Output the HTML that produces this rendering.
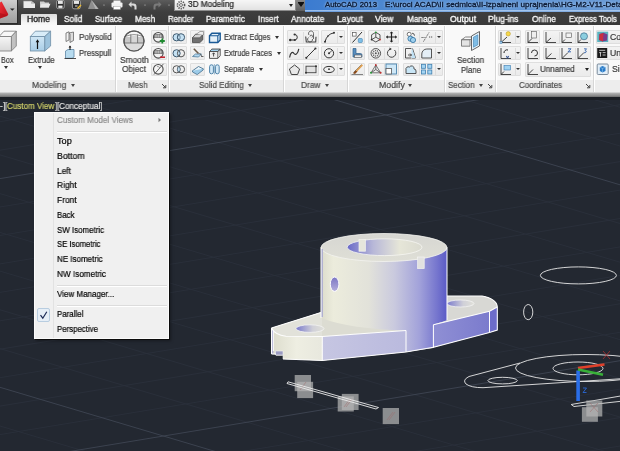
<!DOCTYPE html>
<html><head><meta charset="utf-8">
<style>
*{margin:0;padding:0;box-sizing:border-box}
html,body{width:620px;height:451px;overflow:hidden;background:#232831;font-family:"Liberation Sans",sans-serif}
.a{position:absolute}
.t{position:absolute;white-space:pre;line-height:1;transform-origin:0 0;-webkit-text-stroke:0.2px currentColor;will-change:transform}
#qat{left:0;top:0;width:305px;height:12px;background:linear-gradient(#5c5c5c,#474747 60%,#3e3e3e)}
#title{left:305px;top:0;width:315px;height:12px;background:linear-gradient(rgba(255,255,255,0) 80%,rgba(190,215,245,.75) 87%,rgba(140,180,230,.3) 100%),linear-gradient(90deg,#3b7bd0,#4d88d0 25%,#5f94d4 60%,#6a9ad6)}
#tabs{left:0;top:12px;width:620px;height:13px;background:linear-gradient(#3e3e3e,#383838)}
#ribbon{left:0;top:25px;width:620px;height:55px;background:#f9f9f9}
#plabel{left:0;top:79.5px;width:620px;height:12.5px;background:#ededed}
#shadow{left:0;top:92px;width:620px;height:5px;background:linear-gradient(#dcdcdc 0,#cfcfcf 12%,#ababab 30%,#8c8c8c 70%,#6c6c6c)}
#dshadow{left:0;top:97px;width:620px;height:3px;background:#1b1e24}
.sep{position:absolute;top:26px;width:2px;height:66px;border-left:1px solid #d6d6d6;border-right:1px solid #ffffff}
.btn{position:absolute;background:linear-gradient(#f3f3f3,#ebebeb);border:1px solid #dedede;border-radius:1px}
.arr{position:absolute;width:0;height:0;border-left:2.5px solid transparent;border-right:2.5px solid transparent;border-top:3px solid #333}
</style></head><body>
<svg class="a" style="left:0;top:97px" width="620" height="354" viewBox="0 97 620 354">
<defs>
 <linearGradient id="gcyl" x1="321" y1="0" x2="447" y2="0" gradientUnits="userSpaceOnUse">
  <stop offset="0" stop-color="#dcdccc"/><stop offset=".1" stop-color="#ececdc"/><stop offset=".38" stop-color="#e2e2da"/>
  <stop offset=".58" stop-color="#cacade"/><stop offset=".78" stop-color="#a2a2da"/><stop offset=".92" stop-color="#7676ce"/><stop offset="1" stop-color="#5a5ac6"/>
 </linearGradient>
 <linearGradient id="ghole" x1="347" y1="0" x2="422" y2="0" gradientUnits="userSpaceOnUse">
  <stop offset="0" stop-color="#6a6ac8"/><stop offset=".35" stop-color="#b8b8d8"/><stop offset=".7" stop-color="#e6e6d8"/><stop offset="1" stop-color="#dadad0"/>
 </linearGradient>
 <linearGradient id="gtop" x1="0" y1="233" x2="0" y2="262" gradientUnits="userSpaceOnUse">
  <stop offset="0" stop-color="#d6d6d2"/><stop offset="1" stop-color="#dfdfd6"/>
 </linearGradient>
 <linearGradient id="gend" x1="271" y1="0" x2="322" y2="0" gradientUnits="userSpaceOnUse">
  <stop offset="0" stop-color="#dcdccc"/><stop offset=".5" stop-color="#eeeee2"/><stop offset="1" stop-color="#e8e8de"/>
 </linearGradient>
 <linearGradient id="gfl" x1="322" y1="0" x2="405" y2="0" gradientUnits="userSpaceOnUse">
  <stop offset="0" stop-color="#c6c6e2"/><stop offset="1" stop-color="#babade"/>
 </linearGradient>
 <linearGradient id="ghub" x1="405" y1="0" x2="434" y2="0" gradientUnits="userSpaceOnUse">
  <stop offset="0" stop-color="#c8c8dc"/><stop offset="1" stop-color="#7e7ed0"/>
 </linearGradient>
 <linearGradient id="grf" x1="434" y1="0" x2="497" y2="0" gradientUnits="userSpaceOnUse">
  <stop offset="0" stop-color="#8f8fd4"/><stop offset="1" stop-color="#7878cc"/>
 </linearGradient>
 <linearGradient id="gbh" x1="0" y1="0" x2="1" y2="0">
  <stop offset="0" stop-color="#7a7acc"/><stop offset=".6" stop-color="#d0d0d8"/><stop offset="1" stop-color="#e0e0d8"/>
 </linearGradient>
</defs>
<!-- grid -->
<g stroke="#2a303b" stroke-width=".9" fill="none"><path d="M0 93.3 L620 -9.0 M0 121.7 L620 19.4 M0 150.2 L620 47.9 M0 207.0 L620 104.7 M0 235.5 L620 133.2 M0 263.9 L620 161.6 M0 292.4 L620 190.1 M0 320.8 L620 218.5 M0 349.2 L620 246.9 M0 377.7 L620 275.4 M0 406.1 L620 303.8 M0 434.6 L620 332.3 M0 491.4 L620 389.1 M0 519.9 L620 417.6 M0 548.3 L620 446.0 M0 576.8 L620 474.5 M0 -116.2 L620 68.6 M0 -77.5 L620 107.3 M0 -38.7 L620 146.0 M0 38.7 L620 223.5 M0 77.5 L620 262.2 M0 116.2 L620 300.9 M0 154.9 L620 339.7 M0 193.6 L620 378.4 M0 232.4 L620 417.1 M0 271.1 L620 455.9 M0 309.8 L620 494.6 M0 348.6 L620 533.3 M0 426.0 L620 610.8 M0 464.8 L620 649.5"/></g>
<g stroke="#3e4552" stroke-width=".9" fill="none"><path d="M0 178.6 L620 76.3 M0 463.0 L620 360.7 M0 0.0 L620 184.8 M0 387.3 L620 572.1"/></g>
<!-- base flange -->
<path d="M271.5 328 L322 312 L447 296 L482 296 Q497 299 497.3 307 L497.3 330 L489.5 332.6 L433.4 347.3 L433.4 348 L406 352 L322.3 360.5 L283 359 L283 355 L271.5 354Z" fill="#dcdcd2"/>
<path d="M271.5 328 Q275 335 286 336.2 L322.3 336.5 L322.3 360.5 L283 359 L283 355 L271.5 354Z" fill="url(#gend)"/><path d="M271.5 328 L273.3 330 V354 H271.5Z" fill="#a8a8d0"/>
<path d="M322.3 336.5 L406 330.6 L406 352 L322.3 360.5Z" fill="url(#gfl)"/>
<path d="M406 330.6 L433.4 324.8 L433.4 347.3 L406 352Z" fill="url(#ghub)"/>
<path d="M433.4 324.8 L489.5 311.3 L489.5 332.6 L433.4 347.3Z" fill="url(#grf)"/>
<path d="M489.5 311.3 L497.3 307 L497.3 330 L489.5 332.6Z" fill="#6c6cca"/>
<path d="M275.5 351 h7.5 v4 h-7.5z" fill="#9a9ac0" stroke="#f0f0f0" stroke-width=".6"/><path d="M276 355.5 h7 v3.5" fill="none" stroke="#f0f0f0" stroke-width=".6"/>
<!-- base top face -->
<path d="M271.5 328 L322 312 L322 336.5 L286 336.2 Q275 335 271.5 328Z" fill="#e2e2da"/>
<path d="M447 296 L482 296 Q497 299 497.3 307 L489.5 311.3 L447 321Z" fill="#d8d8d4"/>
<ellipse cx="310" cy="328.6" rx="14" ry="3.8" fill="url(#gbh)" stroke="#f2f2f2" stroke-width=".8"/>
<ellipse cx="460.5" cy="303.5" rx="13.5" ry="3.5" fill="url(#gbh)" stroke="#f2f2f2" stroke-width=".8"/>
<!-- cylinder -->
<path d="M321 247.5 L321 318 Q350 329 406 330.6 L406 352 L433.4 347.3 L433.4 324.8 Q445 321 447 320 L447 247.5Z" fill="url(#gcyl)"/>
<ellipse cx="384" cy="247.5" rx="63" ry="14" fill="url(#gtop)" stroke="#f4f4f0" stroke-width=".8"/>
<ellipse cx="384.6" cy="247.2" rx="37.4" ry="8.4" fill="url(#ghole)" stroke="#f6f6f2" stroke-width=".8"/>
<rect x="359" y="239.6" width="6.4" height="11.6" fill="#e6e6dc" stroke="#f4f4f0" stroke-width=".7"/>
<rect x="417.6" y="257" width="6.6" height="11.6" fill="#e2e2e0" stroke="#f4f4f0" stroke-width=".7"/>
<defs><linearGradient id="gsh" x1="0" y1="0" x2="0" y2="1"><stop offset="0" stop-color="#7c76c4"/><stop offset="1" stop-color="#b4aedc"/></linearGradient></defs>
<ellipse cx="334.6" cy="284.2" rx="4.3" ry="7.2" fill="url(#gsh)" stroke="#ffffff" stroke-width="1"/>
<path d="M322 249 V317" stroke="#b0b0d0" stroke-width="2"/>
<!-- edges -->
<g stroke="#fdfdfd" stroke-width="1.05" fill="none">
 <path d="M321 247.5 V318"/><path d="M447 247.5 V320"/>
 <path d="M271.5 328 Q275 335 286 336.2 L322.3 336.5 L406 330.6"/>
 <path d="M322.3 336.5 V360.5"/><path d="M406 330.6 V352"/><path d="M433.4 324.8 V347.3 L489.5 332.6"/>
 <path d="M433.4 324.8 L489.5 311.3 L497.3 307"/><path d="M489.5 311.3 V332.6"/>
 <path d="M271.5 354 H276 M283 359 L322.3 360.5 L406 352 L433.4 347.3"/>
 <path d="M273.3 330 V351 M271.5 328 V354"/><path d="M497.3 307 V330 L489.5 332.6"/>
 <path d="M271.5 328 L321 312.5"/><path d="M447 296 L482 296 Q497 299 497.3 307"/>
</g>
<!-- other drawing objects -->
<g stroke="#e8e8e8" stroke-width=".9" fill="none">
 <ellipse cx="578.4" cy="275.4" rx="38" ry="8.5"/>
 <ellipse cx="528.2" cy="312.1" rx="4.6" ry="7.6"/>
 <ellipse cx="502.6" cy="380.6" rx="14.7" ry="3.3"/>
 <ellipse cx="578" cy="368.4" rx="25" ry="6.4"/>
 <path d="M520 363 L469 376.5 Q462 380 466 384 Q471 387.7 483 387.7 L620 378.8"/>
 <ellipse cx="586" cy="368" rx="70.5" ry="13.5"/>
 
 <path d="M571.2 404.5 L620 396.1 M571.2 404.5 L574 406.5 L620 401.4"/>
</g>
<!-- grips -->
<g fill="#b4b4b4" fill-opacity=".72">
 <rect x="294.7" y="375" width="16.3" height="16.2"/><rect x="297.2" y="381.8" width="15.9" height="16.3"/>
 <rect x="337.7" y="396.4" width="16.1" height="15.1"/><rect x="341.8" y="393.9" width="16.8" height="16.1"/>
 <rect x="382.7" y="408" width="16.3" height="16.1"/>
 <rect x="581.9" y="407.2" width="16" height="14.6"/><rect x="586.3" y="400.5" width="16" height="16"/>
</g>
<g stroke="#a06a6a" stroke-width=".6" opacity=".8">
 <path d="M300 390 L306 382 M344 407 L350 399 M346 407 L352 399 M387 420 L393 412 M389 420 L395 412 M590 412 L598 403 M590 403 L598 412"/>
</g>
<g stroke="#ececec" stroke-width=".9" fill="none"><path d="M288 381.8 L378.5 407.5 L376 409 L287 383.5Z"/></g>
<!-- UCS -->
<path d="M578.1 401 V370.5" stroke="#2a6ee8" stroke-width="3.6"/>
<path d="M578 368 L604.5 364.5" stroke="#e0402a" stroke-width="2.6"/>
<path d="M578 369.5 L603 374.8" stroke="#38b038" stroke-width="2.6"/>
<path d="M583 388 h3.5 l-3.5 4.5 h3.5" stroke="#2a6ee8" stroke-width=".8" fill="none"/>
<path d="M603 351 L610 359 M610 351 L603 359" stroke="#c03030" stroke-width=".7"/>
</svg>
<div class="a" style="left:0;top:97px;width:620px;height:3px;background:#1b1e24"></div>
<div class="a" id="qat"></div>
<div class="a" id="title"></div>
<div class="a" id="tabs"></div>
<!-- app button -->
<div class="a" style="left:0;top:0;width:18px;height:24px;background:linear-gradient(#cfcfcf,#b4b4b4 50%,#9e9e9e);border-right:1px solid #2a2a2a;border-bottom:1px solid #2a2a2a"></div>
<svg class="a" style="left:0;top:0" width="17" height="23" viewBox="0 0 17 23">
 <defs><linearGradient id="gA" x1="0" y1="0" x2="1" y2="1"><stop offset="0" stop-color="#f03038"/><stop offset="1" stop-color="#b8101a"/></linearGradient></defs>
 <path d="M0 2.5 L1.6 1.6 L8.3 14.2 L7.2 16 L0 18.6Z" fill="url(#gA)"/>
 <path d="M0 13 L7.5 15.2 L0 18.6Z" fill="#a80e16" opacity=".6"/>
 <path d="M10 8.4 L14.6 8.4 L12.3 10.8Z" fill="#262626"/>
</svg>
<!-- QAT icons -->
<svg class="a" style="left:17px;top:0" width="160" height="12" viewBox="17 0 160 12">
 <path d="M23.5 0.8 H31 L35 3.8 V8 H23.5Z" fill="#ececec"/><path d="M31 0.8 V3.8 H35" fill="#bdbdbd"/><path d="M23.5 0.8 H31" stroke="#555" stroke-width=".6"/>
 <path d="M40 1.5 H44 L45 2.5 H49 V7.5 H40Z" fill="#cfcfcf"/><path d="M41.5 3.8 H50.5 L48.8 7.5 H40Z" fill="#e9e9e9"/>
 <rect x="56.6" y="0.2" width="7.6" height="8.4" rx="1.6" fill="#2c2c2c" stroke="#bdbdbd" stroke-width=".7"/><rect x="58" y="0.6" width="4.8" height="3.3" fill="#e6e6e6"/><rect x="58.3" y="5.6" width="4.2" height="2.3" fill="#f0f0f0"/>
 <rect x="72.4" y="0.2" width="8" height="8.6" rx="1.6" fill="#2c2c2c" stroke="#bdbdbd" stroke-width=".7"/><rect x="73.8" y="0.6" width="5.2" height="3.3" fill="#e6e6e6"/><path d="M77.5 8.5 L81 5" stroke="#e8b830" stroke-width="1.4"/><path d="M75 6 h2.5" stroke="#ddd" stroke-width="1"/>
 <path d="M88 9 L91.5 0 L98.5 9Z" fill="#8e8e8e"/><path d="M91.5 0 L98.5 9 L95.5 9Z" fill="#b4b4b4"/>
 <circle cx="104" cy="5" r=".6" fill="#ccc"/>
 <rect x="111.5" y="2.5" width="11" height="5" rx="1" fill="#f0f0f0"/><rect x="113.5" y="0.5" width="7" height="3" fill="#f6f6f6"/><rect x="113.5" y="6.5" width="7" height="3" fill="#fff" stroke="#888" stroke-width=".4"/>
 <path d="M128.5 4.5 l3 -3 v2 h2 a3 3 0 0 1 3 3 v3 h-2 v-2.5 a1.5 1.5 0 0 0 -1.5 -1.5 h-1.5 v2z" fill="#d9d9d9"/>
 <circle cx="145" cy="5" r=".6" fill="#ccc"/>
 <path d="M161.5 4.5 l-3 -3 v2 h-2 a3 3 0 0 0 -3 3 v3 h2 v-2.5 a1.5 1.5 0 0 1 1.5 -1.5 h1.5 v2z" fill="#7a7a7a"/>
 <circle cx="169" cy="5" r=".6" fill="#ccc"/>
</svg>
<!-- workspace combo -->
<div class="a" style="left:173.5px;top:0;width:122px;height:10.5px;background:linear-gradient(#f6f6f6,#e2e2e2);border:1px solid #8c8c8c;border-top:none"></div>
<svg class="a" style="left:174px;top:0" width="14" height="11" viewBox="0 0 14 11">
 <circle cx="7" cy="5" r="3.6" fill="none" stroke="#555" stroke-width="1.6" stroke-dasharray="1.3 1"/>
 <circle cx="7" cy="5" r="1.5" fill="none" stroke="#555" stroke-width=".8"/>
</svg>
<div class="arr" style="left:288.5px;top:4px;border-top-color:#222"></div>
<div class="a" style="left:295.5px;top:0;width:9.5px;height:11px;background:linear-gradient(#8a8a8a,#5e5e5e)"></div>
<div class="arr" style="left:297.5px;top:3px;border-left-width:3px;border-right-width:3px;border-top-width:4px;border-top-color:#111"></div>
<div class="a" style="left:297.5px;top:2px;width:6px;height:1px;background:#111"></div>
<!-- Home tab -->
<div class="a" style="left:21px;top:14px;width:36px;height:12px;background:linear-gradient(#dcdcdc,#f4f4f4 70%,#f9f9f9);border-radius:1px 1px 0 0"></div>
<!-- ribbon -->
<div class="a" id="ribbon"></div>
<div class="a" id="plabel"></div>
<div class="a" id="shadow"></div>
<div class="a" id="dshadow"></div>
<div class="sep" style="left:115px"></div>
<div class="sep" style="left:168px"></div>
<div class="sep" style="left:283px"></div>
<div class="sep" style="left:346.5px"></div>
<div class="sep" style="left:444px"></div>
<div class="sep" style="left:495px"></div>
<div class="sep" style="left:592.5px"></div>
<div class="btn" style="left:150.5px;top:30.2px;width:16.0px;height:14.3px"></div>
<div class="btn" style="left:150.5px;top:46.3px;width:16.0px;height:14.1px"></div>
<div class="btn" style="left:150.5px;top:62.5px;width:16.0px;height:13.7px"></div>
<div class="btn" style="left:171px;top:30.2px;width:15.5px;height:14.3px"></div>
<div class="btn" style="left:189.5px;top:30.2px;width:15.5px;height:14.3px"></div>
<div class="btn" style="left:171px;top:46.3px;width:15.5px;height:14.1px"></div>
<div class="btn" style="left:189.5px;top:46.3px;width:15.5px;height:14.1px"></div>
<div class="btn" style="left:171px;top:62.5px;width:15.5px;height:13.7px"></div>
<div class="btn" style="left:189.5px;top:62.5px;width:15.5px;height:13.7px"></div>
<div class="btn" style="left:286.5px;top:30.2px;width:32.2px;height:14.3px"></div>
<div class="a" style="left:302.5px;top:31.7px;width:1px;height:11.3px;background:#dcdcdc"></div>
<div class="btn" style="left:321px;top:30.2px;width:24.3px;height:14.3px"></div>
<div class="a" style="left:337.3px;top:31.7px;width:1px;height:11.3px;background:#dcdcdc"></div>
<div class="arr" style="left:339.3px;top:36.1px;border-left-width:2px;border-right-width:2px;border-top-width:2.5px;border-top-color:#333"></div>
<div class="btn" style="left:286.5px;top:46.3px;width:32.2px;height:14.1px"></div>
<div class="a" style="left:302.5px;top:47.8px;width:1px;height:11.1px;background:#dcdcdc"></div>
<div class="btn" style="left:321px;top:46.3px;width:24.3px;height:14.1px"></div>
<div class="a" style="left:337.3px;top:47.8px;width:1px;height:11.1px;background:#dcdcdc"></div>
<div class="arr" style="left:339.3px;top:52.099999999999994px;border-left-width:2px;border-right-width:2px;border-top-width:2.5px;border-top-color:#333"></div>
<div class="btn" style="left:286.5px;top:62.5px;width:32.2px;height:13.7px"></div>
<div class="a" style="left:302.5px;top:64.0px;width:1px;height:10.7px;background:#dcdcdc"></div>
<div class="btn" style="left:321px;top:62.5px;width:24.3px;height:13.7px"></div>
<div class="a" style="left:337.3px;top:64.0px;width:1px;height:10.7px;background:#dcdcdc"></div>
<div class="arr" style="left:339.3px;top:68.1px;border-left-width:2px;border-right-width:2px;border-top-width:2.5px;border-top-color:#333"></div>
<div class="btn" style="left:349.8px;top:30.2px;width:14.9px;height:14.3px"></div>
<div class="btn" style="left:368.4px;top:30.2px;width:30.6px;height:14.3px"></div>
<div class="a" style="left:383.7px;top:31.7px;width:1px;height:11.3px;background:#dcdcdc"></div>
<div class="btn" style="left:403.4px;top:30.2px;width:39.2px;height:14.3px"></div>
<div class="a" style="left:419px;top:31.7px;width:1px;height:11.3px;background:#dcdcdc"></div>
<div class="a" style="left:434.5px;top:31.7px;width:1px;height:11.3px;background:#dcdcdc"></div>
<div class="arr" style="left:436.5px;top:36.1px;border-left-width:2px;border-right-width:2px;border-top-width:2.5px;border-top-color:#333"></div>
<div class="btn" style="left:349.8px;top:46.3px;width:14.9px;height:14.1px"></div>
<div class="btn" style="left:368.4px;top:46.3px;width:30.6px;height:14.1px"></div>
<div class="a" style="left:383.7px;top:47.8px;width:1px;height:11.1px;background:#dcdcdc"></div>
<div class="btn" style="left:403.4px;top:46.3px;width:39.2px;height:14.1px"></div>
<div class="a" style="left:419px;top:47.8px;width:1px;height:11.1px;background:#dcdcdc"></div>
<div class="a" style="left:434.5px;top:47.8px;width:1px;height:11.1px;background:#dcdcdc"></div>
<div class="arr" style="left:436.5px;top:52.099999999999994px;border-left-width:2px;border-right-width:2px;border-top-width:2.5px;border-top-color:#333"></div>
<div class="btn" style="left:349.8px;top:62.5px;width:14.9px;height:13.7px"></div>
<div class="btn" style="left:368.4px;top:62.5px;width:30.6px;height:13.7px"></div>
<div class="a" style="left:383.7px;top:64.0px;width:1px;height:10.7px;background:#dcdcdc"></div>
<div class="btn" style="left:403.4px;top:62.5px;width:39.2px;height:13.7px"></div>
<div class="a" style="left:419px;top:64.0px;width:1px;height:10.7px;background:#dcdcdc"></div>
<div class="a" style="left:434.5px;top:64.0px;width:1px;height:10.7px;background:#dcdcdc"></div>
<div class="arr" style="left:436.5px;top:68.1px;border-left-width:2px;border-right-width:2px;border-top-width:2.5px;border-top-color:#333"></div>
<div class="btn" style="left:498.4px;top:30.2px;width:23.1px;height:14.3px"></div>
<div class="a" style="left:514.5px;top:31.7px;width:1px;height:11.3px;background:#dcdcdc"></div>
<div class="arr" style="left:515.8px;top:36.1px;border-left-width:2px;border-right-width:2px;border-top-width:2.5px;border-top-color:#333"></div>
<div class="btn" style="left:498.4px;top:46.3px;width:23.1px;height:14.1px"></div>
<div class="a" style="left:514.5px;top:47.8px;width:1px;height:11.1px;background:#dcdcdc"></div>
<div class="arr" style="left:515.8px;top:52.099999999999994px;border-left-width:2px;border-right-width:2px;border-top-width:2.5px;border-top-color:#333"></div>
<div class="btn" style="left:498.4px;top:62.5px;width:23.1px;height:13.7px"></div>
<div class="a" style="left:514.5px;top:64.0px;width:1px;height:10.7px;background:#dcdcdc"></div>
<div class="arr" style="left:515.8px;top:68.1px;border-left-width:2px;border-right-width:2px;border-top-width:2.5px;border-top-color:#333"></div>
<div class="btn" style="left:524.8px;top:30.2px;width:15.4px;height:14.3px"></div>
<div class="btn" style="left:543.4px;top:30.2px;width:47.6px;height:14.3px"></div>
<div class="a" style="left:559px;top:31.7px;width:1px;height:11.3px;background:#dcdcdc"></div>
<div class="a" style="left:575px;top:31.7px;width:1px;height:11.3px;background:#dcdcdc"></div>
<div class="btn" style="left:524.8px;top:46.3px;width:15.4px;height:14.1px"></div>
<div class="btn" style="left:543.4px;top:46.3px;width:47.6px;height:14.1px"></div>
<div class="a" style="left:559px;top:47.8px;width:1px;height:11.1px;background:#dcdcdc"></div>
<div class="a" style="left:575px;top:47.8px;width:1px;height:11.1px;background:#dcdcdc"></div>
<div class="btn" style="left:524.8px;top:62.4px;width:66.2px;height:14.2px"></div>
<div class="arr" style="left:585.3px;top:68.0px;border-left-width:2.5px;border-right-width:2.5px;border-top-width:3px;border-top-color:#222"></div>
<div class="btn" style="left:595.5px;top:30.2px;width:29.5px;height:14.3px"></div>
<div class="btn" style="left:595.5px;top:46.3px;width:29.5px;height:14.1px"></div>
<div class="arr" style="left:274.5px;top:36.0px;border-left-width:2.5px;border-right-width:2.5px;border-top-width:3px;border-top-color:#333"></div>
<div class="arr" style="left:276.5px;top:52.0px;border-left-width:2.5px;border-right-width:2.5px;border-top-width:3px;border-top-color:#333"></div>
<div class="arr" style="left:258.5px;top:68.0px;border-left-width:2.5px;border-right-width:2.5px;border-top-width:3px;border-top-color:#333"></div>
<div class="arr" style="left:4.0px;top:66.0px;border-left-width:2.5px;border-right-width:2.5px;border-top-width:3px;border-top-color:#333"></div>
<div class="arr" style="left:38.3px;top:66.0px;border-left-width:2.5px;border-right-width:2.5px;border-top-width:3px;border-top-color:#333"></div>
<div class="arr" style="left:70.5px;top:84.3px;border-left-width:2.5px;border-right-width:2.5px;border-top-width:3px;border-top-color:#444"></div>
<div class="arr" style="left:247.5px;top:84.3px;border-left-width:2.5px;border-right-width:2.5px;border-top-width:3px;border-top-color:#444"></div>
<div class="arr" style="left:324.8px;top:84.3px;border-left-width:2.5px;border-right-width:2.5px;border-top-width:3px;border-top-color:#444"></div>
<div class="arr" style="left:407.8px;top:84.3px;border-left-width:2.5px;border-right-width:2.5px;border-top-width:3px;border-top-color:#444"></div>
<div class="arr" style="left:478.5px;top:84.3px;border-left-width:2.5px;border-right-width:2.5px;border-top-width:3px;border-top-color:#444"></div>
<svg class="a" style="left:160.5px;top:82.5px" width="6" height="6" viewBox="0 0 6 6"><path d="M1 1 L4.5 4.5 M4.8 2 V4.8 H2" stroke="#444" stroke-width="1" fill="none"/></svg>
<svg class="a" style="left:487px;top:82.5px" width="6" height="6" viewBox="0 0 6 6"><path d="M1 1 L4.5 4.5 M4.8 2 V4.8 H2" stroke="#444" stroke-width="1" fill="none"/></svg>
<svg class="a" style="left:585px;top:82.5px" width="6" height="6" viewBox="0 0 6 6"><path d="M1 1 L4.5 4.5 M4.8 2 V4.8 H2" stroke="#444" stroke-width="1" fill="none"/></svg>
<svg class="a" style="left:0;top:25px" width="620" height="55" viewBox="0 25 620 55">
<defs>
 <linearGradient id="gbox" x1="0" y1="0" x2="0" y2="1"><stop offset="0" stop-color="#f6f6f6"/><stop offset="1" stop-color="#d9d9d9"/></linearGradient>
 <linearGradient id="gblue" x1="0" y1="0" x2="0" y2="1"><stop offset="0" stop-color="#cfe6f5"/><stop offset="1" stop-color="#a9cde6"/></linearGradient>
 <radialGradient id="gsph" cx=".4" cy=".35" r=".7"><stop offset="0" stop-color="#f4f4f4"/><stop offset="1" stop-color="#c4c4c4"/></radialGradient>
</defs>
<!-- Box -->
<path d="M-1 36.6 L4 31.2 H16.3 L11.3 36.6Z" fill="#f8f8f8" stroke="#7a7a7a" stroke-width=".8"/>
<path d="M11.3 36.6 L16.3 31.2 V46 L11.3 51Z" fill="#c2c2c2" stroke="#7a7a7a" stroke-width=".8"/>
<rect x="-1" y="36.6" width="12.3" height="14.4" fill="url(#gbox)" stroke="#7a7a7a" stroke-width=".8"/>
<!-- Extrude -->
<path d="M30.3 36.6 L35.3 31.2 H50.6 L44.7 36.6Z" fill="#d8ecf8" stroke="#6e8ea6" stroke-width=".8"/>
<path d="M44.7 36.6 L50.6 31.2 V46 L44.7 51Z" fill="#9cc2dc" stroke="#6e8ea6" stroke-width=".8"/>
<rect x="30.3" y="36.6" width="14.4" height="14.4" fill="url(#gblue)" stroke="#6e8ea6" stroke-width=".8"/>
<path d="M37.5 49 V41" stroke="#111" stroke-width="1.2"/><path d="M35.7 42.2 L37.5 39.2 L39.3 42.2Z" fill="#111"/>
<!-- Polysolid -->
<path d="M66 33 L69 31.8 V40 L66 41.5Z" fill="#f2f2f2" stroke="#666" stroke-width=".8"/>
<path d="M69 33 L73.5 32 V40.5 L70 42.5 V34Z" fill="#dcdcdc" stroke="#666" stroke-width=".8"/>
<!-- Presspull -->
<path d="M65.5 51 L68 49.5 H74 V57 L72 58.3 H65.5Z" fill="#b7dbef" stroke="#5e87a6" stroke-width=".8"/>
<path d="M70 50 V46.5" stroke="#111" stroke-width="1"/><path d="M68.6 47.6 L70 45.6 L71.4 47.6Z" fill="#111"/>
<path d="M64.5 58.5 H76" stroke="#222" stroke-width=".8"/>
<!-- Smooth object sphere -->
<circle cx="134" cy="41" r="10" fill="#f6f6f6" stroke="#5a5a5a" stroke-width="1.2"/>
<path d="M124.6 43 H143.4 A9.6 9.6 0 0 1 124.6 43Z" fill="#dcdcdc"/>
<rect x="125" y="37" width="18" height="6" fill="#c8c8c8"/>
<rect x="130.8" y="36" width="6.8" height="7" fill="#d6d6d6"/>
<path d="M126 36.2 Q134 33 142 36.2" stroke="#777" stroke-width=".8" fill="none"/>
<path d="M125 43 H143 M130.8 34.5 V43 M137.6 34.5 V43" stroke="#666" stroke-width=".8"/>
<circle cx="134" cy="41" r="10" fill="none" stroke="#5a5a5a" stroke-width="1.2"/>
<!-- mesh small icons -->
<g stroke="#4a4a4a" stroke-width="1.1">
 <circle cx="158.3" cy="37.3" r="4.8" fill="#f2f2f2"/><circle cx="158.3" cy="53.3" r="4.8" fill="#f2f2f2"/><circle cx="158.3" cy="69.3" r="4.8" fill="#f4f4f4"/>
</g>
<path d="M154 34.6 H162.6 V37.4 H154Z M154 50.6 H162.6 V53.4 H154Z" fill="#9a9a9a" stroke="#444" stroke-width=".6"/>
<path d="M156 34.6 V37.4 M158.3 34.6 V37.4 M160.6 34.6 V37.4 M156 50.6 V53.4 M158.3 50.6 V53.4 M160.6 50.6 V53.4" stroke="#eee" stroke-width=".5"/>
<path d="M159.8 41 h5 M162.3 38.5 v5" stroke="#1e8a30" stroke-width="1.8"/>
<path d="M160 57.2 h5" stroke="#c01e2a" stroke-width="1.5"/>
<path d="M154 74.5 L163.5 63.8" stroke="#555" stroke-width=".9"/><path d="M157 66.5 a3 3 0 0 1 3 1.5" stroke="#777" stroke-width=".7" fill="none"/>
<!-- solid editing: boolean circles -->
<g stroke="#3e5a70" stroke-width="1">
 <circle cx="176.6" cy="37.3" r="3.6" fill="#c6e2f4"/><circle cx="181" cy="37.3" r="3.6" fill="#c6e2f4"/>
 <circle cx="176.6" cy="53.3" r="3.6" fill="#c6e2f4"/><circle cx="181" cy="53.3" r="3.6" fill="none" stroke="#555"/>
 <circle cx="176.6" cy="69.3" r="3.6" fill="none" stroke="#555"/><circle cx="181" cy="69.3" r="3.6" fill="none" stroke="#555"/>
</g>
<path d="M178.8 66.5 A3.6 3.6 0 0 1 178.8 72.1 A3.6 3.6 0 0 1 178.8 66.5Z" fill="#c6e2f4" stroke="#3e5a70" stroke-width=".6"/>
<path d="M178.8 34.5 A3.6 3.6 0 0 1 178.8 40.1 A3.6 3.6 0 0 1 178.8 34.5Z" fill="none" stroke="#3e5a70" stroke-width=".7"/>
<!-- solid editing col2 -->
<path d="M192.5 37.8 L195.5 34.3 H202.8 V39.8 L199.8 42.6 H192.5Z" fill="#707070" stroke="#444" stroke-width=".8"/>
<path d="M192.5 37.8 L195.5 34.3 H202.8 L199.8 37.8Z" fill="#d4d4d4" stroke="#444" stroke-width=".6"/>
<path d="M196.5 34 L200 31.5 H203.5 V35" fill="#eee" stroke="#555" stroke-width=".5"/>
<path d="M192.5 56.5 L195.5 54 H201.5 L198.5 57Z" fill="#b4d8f0" stroke="#4b7a9a" stroke-width=".8"/>
<path d="M193.8 48.8 L198.5 53.5" stroke="#6a5a4a" stroke-width="1.6"/><path d="M199.5 53 L202.5 57 M201 56.5 h2.5" stroke="#555" stroke-width=".8"/>
<path d="M192.5 70.8 L198.5 66.5 L203.2 68.8 L197.2 73.2Z" fill="#e8f4fb" stroke="#46708e" stroke-width=".9"/>
<path d="M192.5 70.8 V72 L197.2 74.6 L203.2 70 V68.8" fill="#9ccbe8" stroke="#46708e" stroke-width=".8"/>
<!-- extract edges / extrude faces / separate -->
<path d="M209.5 35.8 L211.9 33.2 H220.2 V40 L217.8 42.5 H209.5Z" fill="#e4f0f8" stroke="#1a5a96" stroke-width="1.4"/>
<path d="M209.5 35.8 H217.8 V42.5 M217.8 35.8 L220.2 33.2" stroke="#1a5a96" stroke-width="1.1" fill="none"/>
<path d="M209.5 51.5 L211.8 49.2 H220.2 V55.8 L217.8 58.4 H209.5Z" fill="#f0f0f0" stroke="#444" stroke-width=".9"/>
<path d="M209.5 51.5 L211.8 49.2 H220.2 L217.8 51.5Z" fill="#9fd0ee" stroke="#444" stroke-width=".6"/>
<path d="M209.5 51.5 H217.8 V58.4 M217.8 51.5 L220.2 49.2" stroke="#444" stroke-width=".8" fill="none"/>
<path d="M213.6 56.5 V53.2 M212.4 54.2 L213.6 52.8 L214.8 54.2" stroke="#222" stroke-width=".8" fill="none"/>
<rect x="209.6" y="64.8" width="3.8" height="9" rx="1.8" fill="#d4e9f7" stroke="#3f78a2" stroke-width=".9"/>
<rect x="215.4" y="64.8" width="3.8" height="9" rx="1.8" fill="#d4e9f7" stroke="#3f78a2" stroke-width=".9"/>
<path d="M214.4 64 V74.5" stroke="#3f78a2" stroke-width=".5"/>
<!-- DRAW -->
<g fill="none" stroke="#333" stroke-width="1">
 <path d="M290.2 40 H295 a2.8 2.8 0 0 0 0 -5.5 H294.6" stroke-width="1"/>
 <path d="M305.7 36.5 L306.3 42 H315.7 L316 36.8" stroke="#444" stroke-width="1.1"/><path d="M309 35 a2.5 2.5 0 1 1 4.5 -1.5 V39 M308.5 37.5 a2.5 2.5 0 1 0 4 1.5 M310 36.5 a1.3 1.3 0 1 1 2 1" stroke="#444" stroke-width=".8"/>
 <path d="M325 41.8 Q327 34 334 32.8"/>
 <path d="M289.6 57.5 C290.5 52 292.5 51.5 294 53.5 S297.8 54 298.8 48.8" stroke-width="1.2"/>
 <path d="M306.3 57.8 L315.4 48.5"/>
 <circle cx="329" cy="53.3" r="4.6"/>
 <path d="M289.4 69 L294.6 65 L299.6 69 L297.6 74.5 H291.4Z" stroke="#444" fill="#e8e8e8"/>
 <rect x="306" y="66.2" width="10" height="6.5" fill="#e2e2e2" stroke="#444" stroke-width=".9"/>
 <ellipse cx="329" cy="69.5" rx="5.3" ry="3.1"/>
</g>
<g fill="#333">
 <circle cx="290.2" cy="40" r="1.2"/><circle cx="294.8" cy="40" r="1.1"/><circle cx="294.6" cy="34.5" r="1.1"/>
 <circle cx="325" cy="41.8" r="1"/><circle cx="334" cy="32.8" r="1"/><circle cx="328" cy="36" r=".8"/>
 <circle cx="306.3" cy="57.8" r="1.1"/><circle cx="315.4" cy="48.5" r="1.1"/>
 <circle cx="329" cy="53.3" r="1"/><circle cx="306" cy="72.7" r="1"/><circle cx="316" cy="66.2" r="1"/>
 <circle cx="329" cy="69.2" r=".9"/>
</g>
<path d="M329 53.3 L332 50.5" stroke="#333" stroke-width=".8"/>
<!-- MODIFY -->
<path d="M352.5 42.5 L362 32" stroke="#333" stroke-width="1"/>
<rect x="352.5" y="32.5" width="3.6" height="3.6" fill="#fff" stroke="#555" stroke-width=".7"/>
<rect x="358.3" y="38.5" width="4" height="4" rx=".8" fill="#7ec0e8" stroke="#3c7fb0" stroke-width=".6"/>
<path d="M375.8 32.3 L380 34.8 V39.6 L375.8 42 L371.6 39.6 V34.8Z M375.8 37.2 V32.3 M375.8 37.2 L380 39.6 M375.8 37.2 L371.6 39.6" fill="none" stroke="#444" stroke-width=".9"/>
<circle cx="375.8" cy="32.3" r=".9" fill="#2a9a3a"/><circle cx="380" cy="39.6" r=".9" fill="#c03030"/><circle cx="371.6" cy="39.6" r=".9" fill="#333"/>
<path d="M386.5 37 H396.5 M391.5 32 V42" stroke="#222" stroke-width="1.2"/>
<path d="M386 37 l1.8 -1.8 v3.6Z M397 37 l-1.8 -1.8 v3.6Z M391.5 31.5 l-1.8 1.8 h3.6Z M391.5 42.5 l-1.8 -1.8 h3.6Z" fill="#222"/>
<circle cx="409.2" cy="34.3" r="2" fill="#fff" stroke="#555" stroke-width=".8"/>
<circle cx="410.5" cy="38.7" r="2.6" fill="#9fd0ee" stroke="#2d6e9e" stroke-width=".8"/><circle cx="413" cy="40" r="2.6" fill="#9fd0ee" stroke="#2d6e9e" stroke-width=".8"/>
<path d="M412 33.2 a2.5 2.5 0 0 1 2.5 2.5" fill="none" stroke="#333" stroke-width=".8"/>
<path d="M421.5 37.5 H424.5 M429 37 H432.5 M423.5 41.5 L429 32.5" stroke="#444" stroke-width=".9" stroke-dasharray="1.2 .8"/>
<path d="M353 48.5 h3 v5 h4.5 a1.5 1.5 0 0 1 1.5 1.5 v2 h-9z" fill="#5a8fc0" stroke="#2f5f8a" stroke-width=".7"/>
<rect x="354.5" y="55" width="7" height="2.6" fill="#eee" stroke="#555" stroke-width=".6"/>
<circle cx="375.8" cy="53.3" r="4.8" fill="none" stroke="#555" stroke-width="1"/><circle cx="375.8" cy="53.3" r="2.8" fill="none" stroke="#666" stroke-width="1.4" stroke-dasharray="1.2 .8"/><circle cx="375.8" cy="53.3" r="1" fill="#555"/>
<path d="M394.5 50 A4.2 4.2 0 1 1 390 49.2" fill="none" stroke="#444" stroke-width="1"/><path d="M389.5 47.5 l2.3 1.5 l-2.3 1.6Z" fill="#333"/>
<path d="M405.5 48.5 H411.5 M405.5 48.5 V58 H411.5 M412.5 48.5 L415.5 58 H412" fill="none" stroke="#444" stroke-width=".9"/><path d="M412 48.5 L415.5 58 H411.5 V48.5Z" fill="#bfe0f4"/><path d="M408 55 h3.5 M410 53.5 l1.5 1.5 l-1.5 1.5" stroke="#222" stroke-width=".8" fill="none"/>
<path d="M421.8 58 V54 A5 5 0 0 1 426.8 49 H431.5 V58Z" fill="#e4eef6" stroke="#444" stroke-width=".9"/>
<path d="M351.5 74.5 H363 M353.5 72.5 L361.5 64.5" stroke="#555" stroke-width=".7"/><path d="M353 73.3 L355.8 70.3 L357.5 71.5 L355 74Z" fill="#8a4a1a"/><path d="M356 70.2 L361.8 64.2 L363 65.4 L357.2 71.4Z" fill="#e0a050"/>
<path d="M375.8 65 L380.6 72.8 H371 Z" fill="none" stroke="#444" stroke-width=".7"/><path d="M375.8 65 V69.5 M375.8 69.5 L380.6 72.8 M375.8 69.5 L371 72.8" stroke="#444" stroke-width=".8"/>
<circle cx="375.8" cy="65" r=".9" fill="#c03030"/><circle cx="371" cy="72.8" r="1" fill="#2a9a3a"/><circle cx="380.6" cy="72.8" r="1" fill="#c03030"/>
<rect x="386" y="64" width="10.5" height="10" fill="#cfe8f7" stroke="#4a84ad" stroke-width=".9"/><rect x="386" y="68.5" width="5.5" height="5.5" fill="#fff" stroke="#555" stroke-width=".8"/>
<path d="M406 73.5 H416 V71 A2 2 0 0 0 414 69 A2.5 2.5 0 0 0 409.5 67 A2.5 2.5 0 0 0 406 70Z" fill="#c9e6f6" stroke="#444" stroke-width=".9"/>
<g fill="#a4d4f2" stroke="#3f7fb0" stroke-width=".8"><rect x="421.5" y="64.3" width="4" height="4"/><rect x="427.8" y="64.3" width="4" height="4"/><rect x="421.5" y="70" width="4" height="4"/><rect x="427.8" y="70" width="4" height="4"/></g>
<!-- SECTION PLANE -->
<path d="M461.5 39.8 L465.5 37 H474 L470 39.8Z" fill="#f8f8f8" stroke="#666" stroke-width=".8"/>
<path d="M461.5 39.8 H470 V46.2 H461.5Z" fill="#e4e4e4" stroke="#666" stroke-width=".8"/>
<path d="M471.5 36 L479.5 31.5 V46 L471.5 50.5Z" fill="#eaf4fb" stroke="#555" stroke-width=".9"/>
<path d="M473.5 37.2 L477.8 34.8 V44.8 L473.5 47.2Z" fill="#7fbde6" stroke="#3b7db0" stroke-width=".6"/>
<!-- COORDINATES -->
<g fill="none" stroke="#333" stroke-width=".9">
 <path d="M501 32 V42.5 H511 M501 42.5 L507 37"/>
 <path d="M501 48 V58.5 H511"/><path d="M504 53 a3 3 0 0 1 4 -3" stroke="#222" stroke-width="1"/>
 <path d="M501 64 V74.5 H511 M501 74.5 L504 71.5"/>
 <path d="M528 32 V42.5 H538 M528 42.5 L532 38.5"/>
 <path d="M528 48 V58.5 H538"/><path d="M531.5 53 a3 3 0 1 1 3 3" stroke-width="1"/>
 <path d="M546 32 V42.5 H556 M546 42.5 L551 38"/>
 <path d="M562 32 V42.5 H572 M562 42.5 L565 39.5"/>
 <path d="M578 32 V42.5 H588 M578 42.5 L581 39.5"/>
 <path d="M546 48 V58.5 H556 M546 58.5 L551.5 53.5"/>
 <path d="M562 48 V58.5 H572 M562 58.5 L568 52.5"/>
 <path d="M578 48 V58.5 H588 M578 58.5 L584 52.5"/>
 <path d="M528 64 V74.5 H538 M528 74.5 L533 69.5"/>
</g>
<circle cx="508.2" cy="33.8" r="2.2" fill="#f6d84a" stroke="#b39220" stroke-width=".5"/><rect x="500" y="41.5" width="2" height="2" fill="#bfe0f7" stroke="#3a7ab0" stroke-width=".5"/>
<path d="M506 56 l3 2.5 M509 56 l-3 2.5" stroke="#2a4a8a" stroke-width=".9"/>
<rect x="504" y="65.5" width="6.5" height="4.5" fill="#9fd2f2" stroke="#3a7ab0" stroke-width=".6"/>
<rect x="531.5" y="31.5" width="5" height="6.5" fill="#eee" stroke="#555" stroke-width=".6"/>
<rect x="566" y="33" width="5.5" height="4.5" fill="#f2f2f2" stroke="#555" stroke-width=".6"/>
<circle cx="584" cy="36.3" r="3.5" fill="#8ccfe0" stroke="#3a6a8a" stroke-width=".7"/>
<path d="M568 48.8 h3 l-3 3 h3" stroke="#2a5aa8" stroke-width=".9" fill="none"/>
<path d="M584 48.8 h2.6 l-1.5 1.6 a1.2 1.2 0 1 1 -1.2 1.8" stroke="#2a5aa8" stroke-width=".8" fill="none"/>
<rect x="589.5" y="35" width=".01" height=".01"/>
<!-- last panel -->
<rect x="597.2" y="31.7" width="11" height="10.3" fill="#5ab4c0"/><path d="M599.5 34 L603.5 32.8 L607.5 34.5 L607 40.5 L602.5 41.5 L599 40Z" fill="#7a3a8a"/><path d="M599.5 34 L603.5 33 L603 41.4 L599 40Z" fill="#c83040"/>
<rect x="597.2" y="48" width="10" height="10" fill="#1a1a1a"/><path d="M599.2 50.3 h6 M599.2 52.6 h2.2 M602.6 52.6 h3 M602.6 55 h3 M600.5 52.6 v4" stroke="#e8e8e8" stroke-width=".8"/>
<rect x="597.2" y="64" width="11" height="10.5" rx="1" fill="#e2eef8" stroke="#7a8a9a" stroke-width="1"/><path d="M599.8 67.2 l2.7 -1.3 l3 1.3 v3.8 l-3 1.4 l-2.7 -1.4z" fill="#2a7ac8"/><path d="M599.8 67.2 l2.7 1.3 l3 -1.3 M602.5 68.5 v3.9" stroke="#9ad0f0" stroke-width=".5" fill="none"/>
</svg>
<div class="a" style="left:34px;top:112px;width:135px;height:227px;background:#f0f0f0;border:1px solid #fbfbfb;box-shadow:1px 1px 0 #0c0c0c,2px 2px 3px rgba(0,0,0,.35)"></div>
<div class="a" style="left:35px;top:113px;width:19px;height:225px;background:#f0f0f0;border-right:1px solid #e2e2e2"></div>
<div class="a" style="left:57px;top:131px;width:110px;height:1px;background:#dcdcdc"></div>
<div class="a" style="left:57px;top:132px;width:110px;height:1px;background:#fff"></div>
<div class="a" style="left:57px;top:285px;width:110px;height:1px;background:#dcdcdc"></div>
<div class="a" style="left:57px;top:286px;width:110px;height:1px;background:#fff"></div>
<div class="a" style="left:57px;top:304.5px;width:110px;height:1px;background:#dcdcdc"></div>
<div class="a" style="left:57px;top:305.5px;width:110px;height:1px;background:#fff"></div>
<div class="a" style="left:37px;top:308px;width:13px;height:14px;background:#e6eef6;border:1px solid #b8cde0;border-radius:2px"></div>
<svg class="a" style="left:37px;top:308px" width="13" height="14" viewBox="0 0 13 14"><path d="M3.5 7.2 L5.8 10.2 L9.8 3.8" fill="none" stroke="#1c2a55" stroke-width="1.2"/></svg>
<svg class="a" style="left:157px;top:117px" width="5" height="6" viewBox="0 0 5 6"><path d="M1.5 .8 L4 3 L1.5 5.2Z" fill="#777"/></svg>
<div class="t" style="left:325.39px;top:0.88px;font-size:7.7px;color:#0c1c38;text-shadow:0 0 2px #a8c8ec,0 0 3px #a8c8ec;-webkit-text-stroke:0.35px currentColor;transform:scaleX(1.014);">AutoCAD 2013</div>
<div class="t" style="left:385.28px;top:0.88px;font-size:7.7px;color:#0c1c38;text-shadow:0 0 2px #a8c8ec,0 0 3px #a8c8ec;-webkit-text-stroke:0.35px currentColor;transform:scaleX(1.060);">E:\uroci ACAD\II sedmica\II-izpalneni uprajnenia\</div>
<div class="t" style="left:561.49px;top:0.88px;font-size:7.7px;color:#0c1c38;text-shadow:0 0 2px #a8c8ec,0 0 3px #a8c8ec;-webkit-text-stroke:0.35px currentColor;transform:scaleX(1.037);">HG-M2-V11-Det</div>
<div class="t" style="left:618.20px;top:0.88px;font-size:7.7px;color:#0c1c38;text-shadow:0 0 2px #a8c8ec,0 0 3px #a8c8ec;-webkit-text-stroke:0.35px currentColor;">a</div>
<div class="t" style="left:187.61px;top:0.49px;font-size:8.4px;color:#1a1a1a;transform:scaleX(0.980);">3D Modeling</div>
<div class="t" style="left:26.60px;top:15.14px;font-size:8.7px;color:#222222;-webkit-text-stroke:0.35px currentColor;transform:scaleX(0.992);">Home</div>
<div class="t" style="left:64.22px;top:15.14px;font-size:8.7px;color:#f6f6f6;-webkit-text-stroke:0.35px currentColor;transform:scaleX(0.952);">Solid</div>
<div class="t" style="left:95.14px;top:15.14px;font-size:8.7px;color:#f6f6f6;-webkit-text-stroke:0.35px currentColor;transform:scaleX(0.908);">Surface</div>
<div class="t" style="left:135.12px;top:15.14px;font-size:8.7px;color:#f6f6f6;-webkit-text-stroke:0.35px currentColor;transform:scaleX(0.951);">Mesh</div>
<div class="t" style="left:168.24px;top:15.14px;font-size:8.7px;color:#f6f6f6;-webkit-text-stroke:0.35px currentColor;transform:scaleX(0.902);">Render</div>
<div class="t" style="left:205.93px;top:15.14px;font-size:8.7px;color:#f6f6f6;-webkit-text-stroke:0.35px currentColor;transform:scaleX(0.924);">Parametric</div>
<div class="t" style="left:257.52px;top:15.14px;font-size:8.7px;color:#f6f6f6;-webkit-text-stroke:0.35px currentColor;transform:scaleX(0.952);">Insert</div>
<div class="t" style="left:291.22px;top:15.14px;font-size:8.7px;color:#f6f6f6;-webkit-text-stroke:0.35px currentColor;transform:scaleX(0.955);">Annotate</div>
<div class="t" style="left:336.91px;top:15.14px;font-size:8.7px;color:#f6f6f6;-webkit-text-stroke:0.35px currentColor;transform:scaleX(0.981);">Layout</div>
<div class="t" style="left:374.61px;top:15.14px;font-size:8.7px;color:#f6f6f6;-webkit-text-stroke:0.35px currentColor;transform:scaleX(0.974);">View</div>
<div class="t" style="left:407.32px;top:15.14px;font-size:8.7px;color:#f6f6f6;-webkit-text-stroke:0.35px currentColor;transform:scaleX(0.949);">Manage</div>
<div class="t" style="left:449.80px;top:15.14px;font-size:8.7px;color:#f6f6f6;-webkit-text-stroke:0.35px currentColor;">Output</div>
<div class="t" style="left:488.41px;top:15.14px;font-size:8.7px;color:#f6f6f6;-webkit-text-stroke:0.35px currentColor;transform:scaleX(0.972);">Plug-ins</div>
<div class="t" style="left:531.92px;top:15.14px;font-size:8.7px;color:#f6f6f6;-webkit-text-stroke:0.35px currentColor;transform:scaleX(0.951);">Online</div>
<div class="t" style="left:568.84px;top:15.14px;font-size:8.7px;color:#f6f6f6;-webkit-text-stroke:0.35px currentColor;transform:scaleX(0.888);">Express Tools</div>
<div class="t" style="left:0.67px;top:55.84px;font-size:8.7px;color:#3a3a3a;transform:scaleX(0.834);">Box</div>
<div class="t" style="left:27.64px;top:55.84px;font-size:8.7px;color:#3a3a3a;transform:scaleX(0.891);">Extrude</div>
<div class="t" style="left:78.63px;top:32.64px;font-size:8.7px;color:#3a3a3a;transform:scaleX(0.937);">Polysolid</div>
<div class="t" style="left:78.64px;top:48.74px;font-size:8.7px;color:#3a3a3a;transform:scaleX(0.901);">Presspull</div>
<div class="t" style="left:119.51px;top:55.54px;font-size:8.7px;color:#3a3a3a;transform:scaleX(0.965);">Smooth</div>
<div class="t" style="left:122.32px;top:65.14px;font-size:8.7px;color:#3a3a3a;transform:scaleX(0.952);">Object</div>
<div class="t" style="left:223.56px;top:33.04px;font-size:8.7px;color:#3a3a3a;transform:scaleX(0.858);">Extract Edges</div>
<div class="t" style="left:223.66px;top:49.14px;font-size:8.7px;color:#3a3a3a;transform:scaleX(0.855);">Extrude Faces</div>
<div class="t" style="left:223.66px;top:65.14px;font-size:8.7px;color:#3a3a3a;transform:scaleX(0.854);">Separate</div>
<div class="t" style="left:457.03px;top:55.64px;font-size:8.7px;color:#3a3a3a;transform:scaleX(0.935);">Section</div>
<div class="t" style="left:460.54px;top:65.84px;font-size:8.7px;color:#3a3a3a;transform:scaleX(0.900);">Plane</div>
<div class="t" style="left:539.83px;top:64.64px;font-size:8.7px;color:#3a3a3a;transform:scaleX(0.924);">Unnamed</div>
<div class="t" style="left:609.50px;top:33.04px;font-size:8.7px;color:#3a3a3a;">Co</div>
<div class="t" style="left:609.50px;top:49.14px;font-size:8.7px;color:#3a3a3a;">Un</div>
<div class="t" style="left:611.50px;top:65.14px;font-size:8.7px;color:#3a3a3a;">Si</div>
<div class="t" style="left:31.91px;top:80.94px;font-size:8.7px;color:#4a4a4a;transform:scaleX(0.975);">Modeling</div>
<div class="t" style="left:128.33px;top:80.94px;font-size:8.7px;color:#4a4a4a;transform:scaleX(0.922);">Mesh</div>
<div class="t" style="left:199.13px;top:80.94px;font-size:8.7px;color:#4a4a4a;transform:scaleX(0.926);">Solid Editing</div>
<div class="t" style="left:301.42px;top:80.94px;font-size:8.7px;color:#4a4a4a;transform:scaleX(0.957);">Draw</div>
<div class="t" style="left:378.50px;top:80.94px;font-size:8.7px;color:#4a4a4a;transform:scaleX(1.012);">Modify</div>
<div class="t" style="left:448.33px;top:80.94px;font-size:8.7px;color:#4a4a4a;transform:scaleX(0.914);">Section</div>
<div class="t" style="left:519.43px;top:80.94px;font-size:8.7px;color:#4a4a4a;transform:scaleX(0.920);">Coordinates</div>
<div class="t" style="left:57.04px;top:116.07px;font-size:8.9px;color:#8c8c8c;transform:scaleX(0.912);">Custom Model Views</div>
<div class="t" style="left:56.89px;top:137.37px;font-size:8.9px;color:#000000;transform:scaleX(1.034);">Top</div>
<div class="t" style="left:56.91px;top:151.97px;font-size:8.9px;color:#000000;transform:scaleX(0.981);">Bottom</div>
<div class="t" style="left:56.92px;top:166.67px;font-size:8.9px;color:#000000;transform:scaleX(0.945);">Left</div>
<div class="t" style="left:56.92px;top:181.37px;font-size:8.9px;color:#000000;transform:scaleX(0.946);">Right</div>
<div class="t" style="left:56.92px;top:196.07px;font-size:8.9px;color:#000000;transform:scaleX(0.946);">Front</div>
<div class="t" style="left:56.95px;top:210.77px;font-size:8.9px;color:#000000;transform:scaleX(0.887);">Back</div>
<div class="t" style="left:56.94px;top:225.67px;font-size:8.9px;color:#000000;transform:scaleX(0.893);">SW Isometric</div>
<div class="t" style="left:56.95px;top:240.37px;font-size:8.9px;color:#000000;transform:scaleX(0.865);">SE Isometric</div>
<div class="t" style="left:56.94px;top:254.97px;font-size:8.9px;color:#000000;transform:scaleX(0.900);">NE Isometric</div>
<div class="t" style="left:56.93px;top:269.57px;font-size:8.9px;color:#000000;transform:scaleX(0.920);">NW Isometric</div>
<div class="t" style="left:56.94px;top:290.27px;font-size:8.9px;color:#000000;transform:scaleX(0.903);">View Manager...</div>
<div class="t" style="left:56.94px;top:310.27px;font-size:8.9px;color:#000000;transform:scaleX(0.888);">Parallel</div>
<div class="t" style="left:56.95px;top:324.67px;font-size:8.9px;color:#000000;transform:scaleX(0.884);">Perspective</div>
<div class="t" style="left:-0.38px;top:101.82px;font-size:8.6px;color:#d8d8d8;transform:scaleX(0.939);">-</div>
<div class="t" style="left:3.00px;top:101.82px;font-size:8.6px;color:#d8d8d8;">]</div>
<div class="t" style="left:5.43px;top:101.82px;font-size:8.6px;color:#d8d8d8;transform:scaleX(0.920);">[</div>
<div class="t" style="left:7.43px;top:101.82px;font-size:8.6px;color:#d2d26a;transform:scaleX(0.935);">Custom View</div>
<div class="t" style="left:55.15px;top:101.82px;font-size:8.6px;color:#d8d8d8;transform:scaleX(0.878);">]</div>
<div class="t" style="left:57.12px;top:101.82px;font-size:8.6px;color:#d8d8d8;transform:scaleX(0.962);">[</div>
<div class="t" style="left:59.22px;top:101.82px;font-size:8.6px;color:#e0e0e0;transform:scaleX(0.952);">Conceptual</div>
<div class="t" style="left:100.23px;top:101.82px;font-size:8.6px;color:#d8d8d8;transform:scaleX(0.920);">]</div>
</body></html>
